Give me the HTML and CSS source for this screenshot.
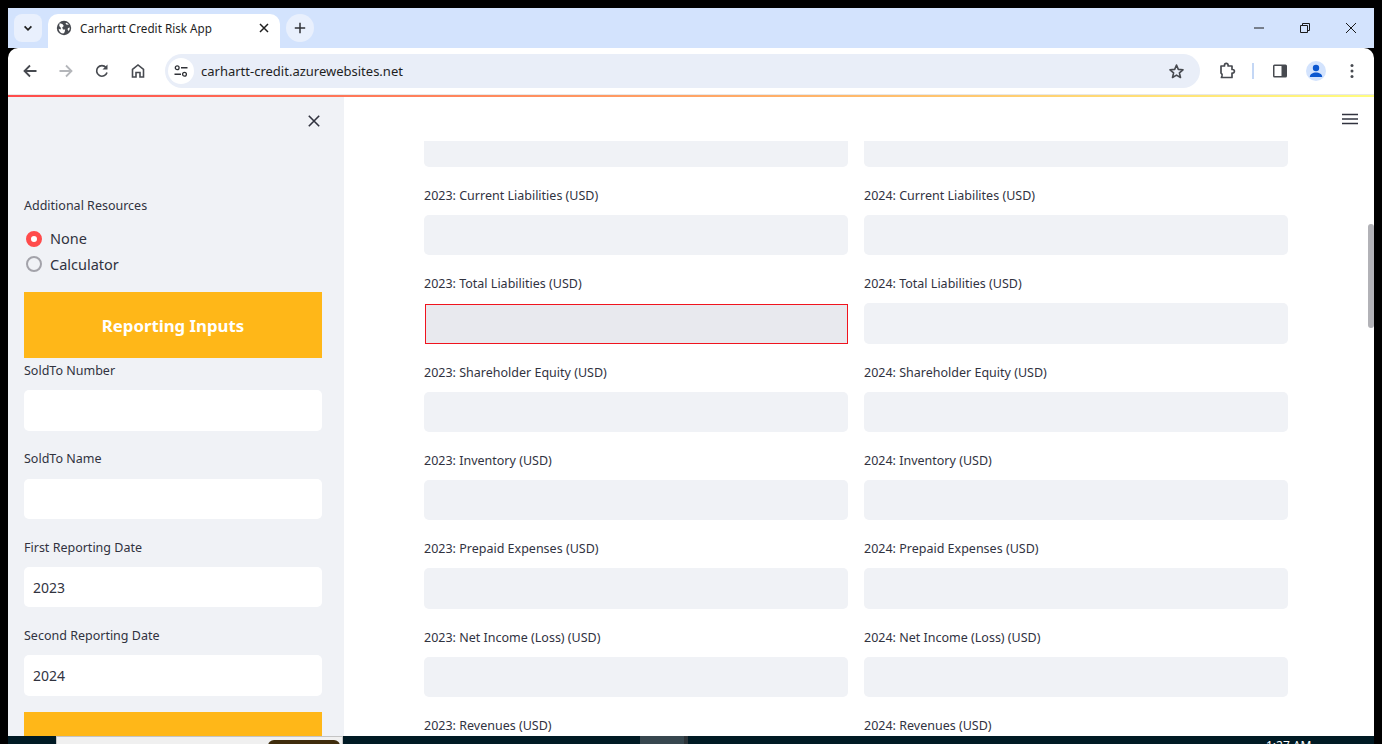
FILE: index.html
```html
<!DOCTYPE html>
<html>
  <head>
    <meta charset="UTF-8" />
    <title>Carhartt Credit Risk App</title>
    <link rel="stylesheet" href="styles.css">
  </head>
  <body>
    <div class="window">
      <div class="tabstrip">
        <button class="tab-search">
          <svg width="12" height="12" viewBox="0 0 12 12"><path d="M2.6 4.4 6 7.8l3.4-3.4" fill="none" stroke="#1f1f1f" stroke-width="1.7"/></svg>
        </button>
        <div class="tab">
          <svg class="globe" width="16" height="16" viewBox="0 0 16 16">
            <circle cx="8" cy="8" r="7.2" fill="#474a50"/>
            <path d="M3.600 3.200 6.400 4l1.400 2-1.600 1.400.8 2 2.200.2-.6 2.600-1.200 1.400C4.800 13.600 3 11.500 2.600 8.800L4.500 9.600 5 8 3.200 6Z" fill="#fff"/>
            <path d="M10.600 2.800 9.400 3.600l1.400 1.200 2.200-.2ZM12 8l1.800-.6-.4 2.400-1 1.200-.8-1.400Z" fill="#fff"/>
          </svg>
          <span class="tab-title">Carhartt Credit Risk App</span>
          <svg class="tab-close" width="10" height="10" viewBox="0 0 10 10"><path d="M1 1l8 8M9 1l-8 8" stroke="#1f1f1f" stroke-width="1.5"/></svg>
        </div>
        <button class="tab-new">
          <svg width="12" height="12" viewBox="0 0 12 12"><path d="M6 .8v10.400M.8 6h10.400" stroke="#303237" stroke-width="1.500"/></svg>
        </button>
        <div class="caption-btns">
          <svg width="10" height="10" viewBox="0 0 10 10"><path d="M0 5h10" stroke="#1a1a1a" stroke-width="1"/></svg>
          <svg width="10" height="10" viewBox="0 0 10 10"><path d="M.5 2.500h7v7h-7zM2.500 2.500v-2h7v7h-2" fill="none" stroke="#1a1a1a"/></svg>
          <svg width="10" height="10" viewBox="0 0 10 10"><path d="M0 0l10 10M10 0 0 10" stroke="#1a1a1a"/></svg>
        </div>
      </div>

      <div class="toolbar">
        <svg class="nav-icon" width="16" height="16" viewBox="0 0 16 16"><path d="M14.500 8H2.500M8 2.500 2.500 8 8 13.500" fill="none" stroke="#474a50" stroke-width="1.800"/></svg>
        <svg class="nav-icon" width="16" height="16" viewBox="0 0 16 16"><path d="M1.500 8h12M8 2.500 13.500 8 8 13.500" fill="none" stroke="#b4b6ba" stroke-width="1.800"/></svg>
        <svg class="nav-icon" width="16" height="16" viewBox="0 0 16 16"><path d="M13 9.500A5.300 5.300 0 1 1 12 4.500" fill="none" stroke="#474a50" stroke-width="1.700"/><path d="M13.500 1.500v5h-5z" fill="#474a50"/></svg>
        <svg class="nav-icon" width="16" height="16" viewBox="0 0 16 16"><path d="M2.500 14V6.500L8 2l5.500 4.500V14H10V9.500H6V14Z" fill="none" stroke="#474a50" stroke-width="1.600"/></svg>
        <div class="omnibox">
          <span class="site-info">
            <svg width="14" height="12" viewBox="0 0 14 12">
              <circle cx="3.200" cy="2.800" r="1.900" fill="none" stroke="#303237" stroke-width="1.300"/>
              <path d="M7 2.800h6.500M.5 9.200H7" stroke="#303237" stroke-width="1.400"/>
              <circle cx="10.500" cy="9.200" r="1.900" fill="none" stroke="#303237" stroke-width="1.300"/>
            </svg>
          </span>
          <span class="url">carhartt-credit.azurewebsites.net</span>
          <svg class="star" width="17" height="17" viewBox="0 0 17 17"><path d="M8.500 2 10.300 6.400 15 6.800 11.400 9.900 12.500 14.500 8.500 12.100 4.500 14.500 5.600 9.900 2 6.800 6.700 6.400Z" fill="none" stroke="#474a50" stroke-width="1.600" stroke-linejoin="round"/></svg>
        </div>
        <div class="toolbar-right">
          <svg class="ext" width="18" height="18" viewBox="0 0 18 18"><path d="M3 4h3.500V3.200a1.800 1.800 0 0 1 3.600 0V4H14v3.500h.6a1.800 1.800 0 0 1 0 3.600H14V15.500H3.400l.6-1.500c.5-1.600-.4-2.600-1-3Z" fill="none" stroke="#474a50" stroke-width="1.700" stroke-linejoin="round"/></svg>
          <span class="toolbar-sep"></span>
          <svg class="side" width="16" height="16" viewBox="0 0 16 16"><rect x="1" y="1.500" width="14" height="13" rx="1.500" fill="#474a50"/><rect x="2.500" y="3" width="7" height="10" fill="#fff"/></svg>
          <span class="avatar">
            <svg width="20" height="20" viewBox="0 0 20 20"><circle cx="10" cy="7" r="3.200" fill="#0b57d0"/><path d="M3.800 16c0-3 3-4.500 6.200-4.500s6.200 1.500 6.200 4.500Z" fill="#0b57d0"/></svg>
          </span>
          <svg class="menu-dots" width="4" height="16" viewBox="0 0 4 16"><circle cx="2" cy="2.500" r="1.500" fill="#474a50"/><circle cx="2" cy="8" r="1.500" fill="#474a50"/><circle cx="2" cy="13.500" r="1.500" fill="#474a50"/></svg>
        </div>
      </div>
      <div class="decoration"></div>

      <div class="app">
        <aside class="sidebar">
          <div class="sidebar-top">
            <svg width="12" height="12" viewBox="0 0 12 12"><path d="M.8.8l10.400 10.400M11.200.8.8 11.200" stroke="#31333f" stroke-width="1.600"/></svg>
          </div>
          <div class="side-label">Additional Resources</div>
          <div class="radios">
            <div class="radio"><span class="dot dot-on"></span>None</div>
            <div class="radio"><span class="dot"></span>Calculator</div>
          </div>
          <div class="banner">Reporting Inputs</div>
          <div class="side-field">
            <div class="side-label">SoldTo Number</div>
            <div class="side-input"></div>
          </div>
          <div class="side-field">
            <div class="side-label">SoldTo Name</div>
            <div class="side-input"></div>
          </div>
          <div class="side-field">
            <div class="side-label">First Reporting Date</div>
            <div class="side-input">2023</div>
          </div>
          <div class="side-field">
            <div class="side-label">Second Reporting Date</div>
            <div class="side-input">2024</div>
          </div>
          <div class="banner banner-next"></div>
        </aside>

        <main class="main">
          <div class="main-header">
            <svg width="16" height="12" viewBox="0 0 16 12"><path d="M0 1.500h16M0 6h16M0 10.500h16" stroke="#31333f" stroke-width="1.700"/></svg>
          </div>
          <div class="form-grid">
            <div class="field-input field-cut"></div>
            <div class="field-input field-cut"></div>

            <div class="field"><label>2023: Current Liabilities (USD)</label><div class="field-input"></div></div>
            <div class="field"><label>2024: Current Liabilites (USD)</label><div class="field-input"></div></div>

            <div class="field"><label>2023: Total Liabilities (USD)</label><div class="field-input field-focus"></div></div>
            <div class="field"><label>2024: Total Liabilities (USD)</label><div class="field-input"></div></div>

            <div class="field"><label>2023: Shareholder Equity (USD)</label><div class="field-input"></div></div>
            <div class="field"><label>2024: Shareholder Equity (USD)</label><div class="field-input"></div></div>

            <div class="field"><label>2023: Inventory (USD)</label><div class="field-input"></div></div>
            <div class="field"><label>2024: Inventory (USD)</label><div class="field-input"></div></div>

            <div class="field"><label>2023: Prepaid Expenses (USD)</label><div class="field-input"></div></div>
            <div class="field"><label>2024: Prepaid Expenses (USD)</label><div class="field-input"></div></div>

            <div class="field"><label>2023: Net Income (Loss) (USD)</label><div class="field-input"></div></div>
            <div class="field"><label>2024: Net Income (Loss) (USD)</label><div class="field-input"></div></div>

            <div class="field"><label>2023: Revenues (USD)</label><div class="field-input"></div></div>
            <div class="field"><label>2024: Revenues (USD)</label><div class="field-input"></div></div>
          </div>
          <div class="scroll-thumb"></div>
        </main>
      </div>

      <div class="taskbar">
        <div class="task-search"><span class="task-pill"></span></div>
        <div class="task-tile"></div>
        <div class="task-clock">1:27 AM</div>
      </div>
    </div>
  </body>
</html>
```

FILE: styles.css
```css
html,
body {
  margin: 0;
  height: 744px;
  overflow: hidden;
  background-color: #000000;
}
body {
  padding: 8px 8px 0;
  box-sizing: border-box;
  font-family: "Noto Sans", Arial, sans-serif;
}
button {
  border: none;
  padding: 0;
  display: flex;
  align-items: center;
  justify-content: center;
}
.window {
  height: 736px;
  display: flex;
  flex-direction: column;
}

/* browser chrome */
.tabstrip {
  height: 40px;
  flex: none;
  display: flex;
  align-items: flex-start;
  background-color: #d3e3fd;
  padding: 6px 0 0 6px;
  box-sizing: border-box;
}
.tab-search {
  width: 28px;
  height: 28px;
  border-radius: 8px;
  background-color: #e9f0fd;
}
.tab {
  width: 232px;
  height: 34px;
  margin-left: 6px;
  padding: 0 11px 6px 8px;
  box-sizing: border-box;
  display: flex;
  align-items: center;
  background-color: #ffffff;
  border-radius: 10px 10px 0 0;
}
.tab-title {
  margin-left: 8px;
  flex: 1;
  font-size: 11.700px;
  color: #1f1f1f;
}
.tab-new {
  width: 28px;
  height: 28px;
  margin-left: 6px;
  border-radius: 50%;
  background-color: #e9f0fd;
}
.caption-btns {
  margin-left: auto;
  width: 138px;
  height: 28px;
  display: flex;
  align-items: center;
  justify-content: space-between;
  padding-right: 18px;
  box-sizing: border-box;
  padding-left: 18px;
}
.toolbar {
  height: 47px;
  flex: none;
  display: flex;
  align-items: center;
  padding-left: 14px;
  box-sizing: border-box;
  background-color: #ffffff;
  border-radius: 10px 10px 0 0;
  border-bottom: 1px solid #e8e8e8;
  margin-top: 0;
}
.nav-icon {
  margin-right: 20px;
  flex: none;
}
.omnibox {
  width: 1035px;
  height: 34px;
  margin-left: -1px;
  display: flex;
  align-items: center;
  background-color: #e9eef8;
  border-radius: 17px;
  flex: none;
}
.site-info {
  width: 26px;
  height: 26px;
  margin-left: 3px;
  border-radius: 50%;
  background-color: #ffffff;
  display: flex;
  align-items: center;
  justify-content: center;
}
.url {
  margin-left: 7px;
  font-size: 13px;
  color: #1f1f1f;
  flex: 1;
}
.star {
  margin-right: 15px;
}
.toolbar-right {
  flex: 1;
  display: flex;
  align-items: center;
  padding-left: 18px;
}
.toolbar-sep {
  width: 2px;
  height: 16px;
  margin: 0 18px 0 16px;
  background-color: #c4d7f5;
}
.avatar {
  width: 20px;
  height: 20px;
  margin-left: 18px;
  border-radius: 50%;
  background-color: #d3e3fd;
  overflow: hidden;
}
.menu-dots {
  margin-left: 24px;
}
.decoration {
  height: 2px;
  flex: none;
  background-image: linear-gradient(90deg, #ff4b4b, #fffd80);
}

/* streamlit app */
.app {
  flex: 1;
  min-height: 0;
  display: flex;
}
.sidebar {
  width: 336px;
  flex: none;
  padding: 0 22px 0 16px;
  box-sizing: border-box;
  background-color: #f0f2f6;
  overflow: hidden;
  color: #31333f;
}
.sidebar-top {
  height: 48px;
  display: flex;
  justify-content: flex-end;
  align-items: center;
  padding-right: 2px;
}
.side-label {
  height: 20px;
  font-size: 12.500px;
  line-height: 22px;
}
.sidebar-top + .side-label {
  margin-top: 50px;
}
.radios {
  margin-top: 10.500px;
}
.radio {
  height: 25.500px;
  display: flex;
  align-items: center;
  font-size: 14.500px;
}
.dot {
  width: 16px;
  height: 16px;
  margin: 0 8px 0 2px;
  box-sizing: border-box;
  border: 2px solid #a3a3aa;
  border-radius: 50%;
  background-color: #f0f2f6;
}
.dot-on {
  margin-top: 1px;
  border: 5px solid #ff4b4b;
  background-color: #ffffff;
}
.banner {
  height: 66px;
  margin-top: 15.500px;
  display: flex;
  align-items: center;
  justify-content: center;
  background-color: #ffb718;
  color: #ffffff;
  font-size: 16.800px;
  font-weight: 700;
}
.side-field {
  margin-bottom: 17.600px;
}
.banner + .side-field {
  margin-top: 2px;
}
.side-input {
  height: 40.330px;
  margin-top: 10.400px;
  padding-left: 9px;
  display: flex;
  align-items: center;
  background-color: #ffffff;
  border-radius: 5px;
  font-size: 14px;
}
.banner-next {
  margin-top: -1.300px;
}
.main {
  flex: 1;
  min-width: 0;
  position: relative;
  background-color: #ffffff;
  overflow: hidden;
}
.main-header {
  height: 44px;
  display: flex;
  align-items: center;
  justify-content: flex-end;
  padding: 0 16px 0 0;
  box-sizing: border-box;
}
.form-grid {
  width: 864px;
  margin-left: 80px;
  display: grid;
  grid-template-columns: 424px 424px;
  column-gap: 16px;
  row-gap: 18px;
}
.field label {
  display: block;
  height: 20px;
  margin-bottom: 10px;
  font-size: 12.500px;
  line-height: 22px;
  color: #31333f;
}
.field-input {
  height: 40.330px;
  background-color: #f0f2f6;
  border-radius: 5px;
  box-sizing: border-box;
}
.field-cut {
  height: 26px;
  border-radius: 0 0 5px 5px;
}
.field-focus {
  height: 39.330px;
  margin: 11px 0 0 1px;
  background-color: #e8e9ee;
  border: 1px solid #f0141e;
  border-radius: 0;
}
.scroll-thumb {
  position: absolute;
  top: 127px;
  right: 0;
  width: 6px;
  height: 104px;
  border-radius: 3px;
  background-color: #b2b2b7;
}

/* windows taskbar peeking in at the bottom */
.taskbar {
  height: 8px;
  flex: none;
  display: flex;
  background-color: #001a24;
  overflow: hidden;
  position: relative;
  padding-left: 48px;
}
.task-search {
  width: 287px;
  box-sizing: border-box;
  background-color: #f0f0f0;
  border: 1px solid #c4c4c4;
  border-bottom: none;
  padding: 3px 0 0 211px;
}
.task-pill {
  display: block;
  width: 72px;
  height: 12px;
  border-radius: 6px 6px 0 0;
  background-color: #3f2c0c;
}
.task-tile {
  width: 44px;
  margin-left: 297px;
  background-color: #37474f;
  border-right: 4px solid #2c3338;
}
.task-clock {
  margin-left: 578px;
  padding-top: 3px;
  font-size: 12px;
  line-height: 14px;
  color: #ffffff;
}
```
